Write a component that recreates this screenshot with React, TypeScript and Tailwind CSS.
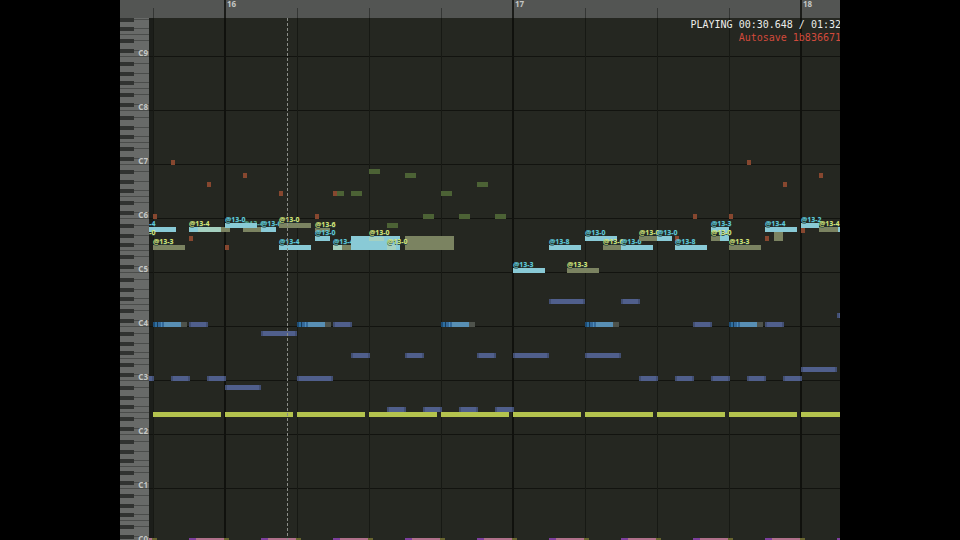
import clsx from 'clsx';

type Kind = 'kick' | 'bass' | 'hat' | 'arp' | 'lead' | 'echo' | 'mix' | 'drone';
type Tone = 'cyan' | 'lime' | 'teal';
type NoteData = [kind: Kind, x: number, y: number, w: number, h?: number, label?: string, tone?: Tone];

// x is counted in pixels from the first visible beat, y from the top of the roll
const BEAT = 72;
const LEAD_IN = 4;
const OCTAVE = 54;
const FIRST_C = 38;

const kindClass: Record<Kind, string> = {
  kick: 'bg-[#87472f]',
  bass: 'bg-[#505f8c] border-x-2 border-[#424f73]',
  hat: 'bg-[#4c6235]',
  arp: 'bg-[#588fb4]',
  lead: 'bg-[#89cad6]',
  echo: 'bg-[#7b8361]',
  mix: 'bg-[#a5d0bf]',
  drone: 'bg-[#b4c34e]',
};

const toneClass: Record<Tone, string> = {
  cyan: 'text-[#5fcbdc]',
  lime: 'text-[#d5e677]',
  teal: 'text-[#59ad93]',
};

const bars = [
  { beat: 1, name: '16' },
  { beat: 5, name: '17' },
  { beat: 9, name: '18' },
];
const beats = Array.from({ length: 18 }, (_, i) => i);
const octaves = [9, 8, 7, 6, 5, 4, 3, 2, 1, 0];

const kicks: NoteData[] = [
  ['kick', 18, 142, 4],
  ['kick', 54, 164, 4],
  ['kick', 90, 155, 4],
  ['kick', 0, 196, 4],
  ['kick', 36, 218, 4],
  ['kick', 72, 227, 4],
  ['kick', 126, 173, 4],
  ['kick', 162, 196, 4],
  ['kick', 180, 173, 4],
  ['kick', 522, 218, 4],
  ['kick', 540, 196, 4],
  ['kick', 576, 196, 4],
  ['kick', 594, 142, 4],
  ['kick', 612, 218, 4],
  ['kick', 630, 164, 4],
  ['kick', 648, 210, 4],
  ['kick', 666, 155, 4],
];

const hats: NoteData[] = [
  ['hat', 184, 173, 7],
  ['hat', 198, 173, 11],
  ['hat', 216, 151, 11],
  ['hat', 234, 205, 11],
  ['hat', 252, 155, 11],
  ['hat', 270, 196, 11],
  ['hat', 288, 173, 11],
  ['hat', 306, 196, 11],
  ['hat', 324, 164, 11],
  ['hat', 342, 196, 11],
];

const bass: NoteData[] = [
  ['bass', 36, 304, 19],
  ['bass', 180, 304, 19],
  ['bass', 540, 304, 19],
  ['bass', 612, 304, 19],
  ['bass', 108, 313, 36],
  ['bass', -18, 358, 19],
  ['bass', 18, 358, 19],
  ['bass', 54, 358, 19],
  ['bass', 144, 358, 36],
  ['bass', 486, 358, 19],
  ['bass', 522, 358, 19],
  ['bass', 558, 358, 19],
  ['bass', 594, 358, 19],
  ['bass', 630, 358, 19],
  ['bass', 72, 367, 36],
  ['bass', 198, 335, 19],
  ['bass', 252, 335, 19],
  ['bass', 324, 335, 19],
  ['bass', 360, 335, 36],
  ['bass', 432, 335, 36],
  ['bass', 234, 389, 19],
  ['bass', 270, 389, 19],
  ['bass', 306, 389, 19],
  ['bass', 342, 389, 19],
  ['bass', 648, 349, 36],
  ['bass', 396, 281, 36],
  ['bass', 468, 281, 19],
  ['bass', 684, 295, 36],
];

const melody: NoteData[] = [
  ['lead', -18, 209, 41, 5, '@13-4', 'cyan'],
  ['echo', 0, 227, 32, 5, '@13-3', 'lime'],
  ['echo', 68, 209, 9],
  ['lead', 36, 209, 9],
  ['mix', 45, 209, 23],
  ['echo', 90, 209, 19, 5, '@13-4', 'teal'],
  ['lead', 72, 205, 32, 5, '@13-0', 'cyan'],
  ['lead', 108, 209, 15, 5, '@13-6', 'cyan'],
  ['echo', 126, 205, 32, 5, '@13-0', 'lime'],
  ['lead', 126, 227, 32, 5, '@13-4', 'cyan'],
  ['echo', 162, 210, 15, 4, '@13-6', 'lime'],
  ['lead', 162, 218, 15, 5, '@13-0', 'cyan'],
  ['echo', 189, 227, 9],
  ['mix', 180, 227, 9, 5, '@13-4', 'cyan'],
  ['lead', 198, 218, 49, 14],
  ['echo', 252, 218, 49, 14],
  ['mix', 216, 219, 15, 4],
  ['mix', 234, 227, 9],
  ['lead', 360, 250, 32, 5, '@13-3', 'cyan'],
  ['lead', 396, 227, 32, 5, '@13-8', 'cyan'],
  ['echo', 414, 250, 32, 5, '@13-3', 'lime'],
  ['lead', 432, 218, 32, 5, '@13-0', 'cyan'],
  ['echo', 450, 227, 19, 5, '@13-6', 'lime'],
  ['lead', 468, 227, 32, 5, '@13-6', 'cyan'],
  ['echo', 486, 218, 19, 5, '@13-0', 'lime'],
  ['lead', 504, 218, 15, 5, '@13-0', 'cyan'],
  ['lead', 522, 227, 32, 5, '@13-8', 'cyan'],
  ['lead', 558, 209, 18, 5, '@13-3', 'cyan'],
  ['echo', 558, 218, 9],
  ['lead', 567, 214, 9, 9],
  ['echo', 576, 227, 32, 5, '@13-3', 'lime'],
  ['echo', 621, 213, 9, 10],
  ['lead', 612, 209, 32, 5, '@13-4', 'cyan'],
  ['lead', 648, 205, 18, 5, '@13-2', 'cyan'],
  ['echo', 666, 209, 19, 5, '@13-4', 'lime'],
  ['lead', 685, 209, 19],
];

// Labels of notes that sit underneath another note
const labels: { x: number; y: number; text: string; tone: Tone }[] = [
  { x: -18, y: 212, text: '@13-0', tone: 'lime' },
  { x: 36, y: 203, text: '@13-4', tone: 'lime' },
  { x: 216, y: 212, text: '@13-0', tone: 'lime' },
  { x: 234, y: 221, text: '@13-0', tone: 'lime' },
  { x: 558, y: 212, text: '@13-0', tone: 'lime' },
];

const tagText =
  "font-['Noto_Sans',sans-serif] text-[7px] leading-[6px] font-bold whitespace-nowrap [text-shadow:0_1px_0_#2c4a48]";
const rulerText = "font-['Noto_Sans',sans-serif] text-[8px] leading-[7px] font-bold text-[#c4c6c4]";

const Note = ({ note }: { note: NoteData }) => {
  const [kind, x, y, w, h = 5, label, tone = 'cyan'] = note;

  return (
    <div className={clsx('absolute', kindClass[kind])} style={{ left: x + LEAD_IN, top: y, width: w, height: h }}>
      {label && <span className={clsx('absolute bottom-full left-0', tagText, toneClass[tone])}>{label}</span>}
    </div>
  );
};

// Plucked notes fade from a striped attack into a grey tail
const Pluck = ({ x }: { x: number }) => (
  <div className="absolute flex h-[5px]" style={{ left: x + LEAD_IN, top: 304 }}>
    <div className="w-[2px] bg-[#1d4c75]" />
    <div className="w-[2px] bg-[#2e6fa0]" />
    <div className="w-px bg-[#173a58]" />
    <div className="w-[3px] bg-[#34699a]" />
    <div className="w-px bg-[#4d8cba]" />
    <div className="w-[2px] bg-[#34699a]" />
    <div className={clsx('w-[17px]', kindClass.arp)} />
    <div className="w-[6px] bg-[#4f534c]" />
  </div>
);

const LowNote = ({ x }: { x: number }) => (
  <div className="absolute flex h-[5px]" style={{ left: x + LEAD_IN, top: 520 }}>
    <div className="w-[7px] bg-[#7d3f9c]" />
    <div className="w-[28px] bg-[#b0708a]" />
    <div className="w-[5px] bg-[#69652f]" />
  </div>
);

const WhiteKey = ({ className, sharp }: { className: string; sharp?: boolean }) => (
  <div className={clsx('relative border-b border-[#4a4c4a] bg-[#686a68]', className)}>
    {sharp && <div className="absolute -bottom-[3px] left-0 z-10 h-1 w-[14px] bg-[#313331]" />}
  </div>
);

const Octave = ({ n }: { n: number }) => (
  <div className="relative flex flex-col">
    <WhiteKey className="h-[7px]" sharp />
    <WhiteKey className="h-[10px]" sharp />
    <WhiteKey className="h-[9px]" sharp />
    <WhiteKey className="h-[6px]" />
    <WhiteKey className="h-[6px]" sharp />
    <WhiteKey className="h-[10px]" sharp />
    <WhiteKey className="h-[6px]" />
    <span className={clsx('absolute right-px bottom-px', rulerText)}>C{n}</span>
  </div>
);

const Ruler = () => (
  <header className="h-[18px] shrink-0 bg-[#535553] pl-[29px]">
    <div className="relative h-full overflow-x-clip">
      {beats.map((b) => (
        <div
          key={b}
          className={clsx('absolute bottom-0', b % 4 === 1 ? 'h-full w-[2px] bg-[#1b1c19]' : 'h-[10px] w-px bg-[#343634]')}
          style={{ left: b * BEAT + LEAD_IN - (b % 4 === 1 ? 1 : 0) }}
        />
      ))}
      {bars.map((bar) => (
        <span key={bar.name} className={clsx('absolute top-0', rulerText)} style={{ left: bar.beat * BEAT + LEAD_IN + 2 }}>
          {bar.name}
        </span>
      ))}
    </div>
  </header>
);

const Roll = () => (
  <main className="relative flex-1 overflow-hidden bg-[#252721]">
    <div className="absolute inset-y-0 left-0 w-1 bg-[#1c1e1a]" />
    {octaves.map((n, i) => (
      <div key={n} className="absolute inset-x-0 h-px bg-[#12130f]" style={{ top: FIRST_C + i * OCTAVE }} />
    ))}
    {beats.map((b) => (
      <div
        key={b}
        className={clsx('absolute inset-y-0', b % 4 === 1 ? 'w-[2px] bg-[#10110d]' : 'w-px bg-[#171914]')}
        style={{ left: b * BEAT + LEAD_IN - (b % 4 === 1 ? 1 : 0) }}
      />
    ))}
    {beats.map((b) => (
      <Note key={b} note={['drone', b * BEAT, 394, 68]} />
    ))}
    {[0, 2, 4, 6, 8].map((b) => (
      <Pluck key={b} x={b * BEAT} />
    ))}
    {[...bass, ...hats, ...kicks, ...melody].map((note, i) => (
      <Note key={i} note={note} />
    ))}
    {labels.map((l) => (
      <span
        key={`${l.x}-${l.y}`}
        className={clsx('absolute', tagText, toneClass[l.tone])}
        style={{ left: l.x + LEAD_IN, top: l.y }}
      >
        {l.text}
      </span>
    ))}
    {beats.map((b) => (
      <LowNote key={b} x={b * BEAT - 36} />
    ))}
    <div className="absolute inset-y-0 left-[138px] w-px bg-[repeating-linear-gradient(to_bottom,#8b8d88_0_3px,transparent_3px_5px)]" />
    <div className="absolute top-0 -right-px text-right font-['DejaVu_Sans_Mono',monospace] text-[10px] leading-[13px] whitespace-nowrap">
      <p className="text-[#ecedea]">PLAYING 00:30.648 / 01:32</p>
      <p className="text-[#d24a3c]">Autosave 1b836671</p>
    </div>
  </main>
);

const App = () => (
  <div className="flex h-screen justify-center bg-black">
    <div className="flex w-3/4 flex-col overflow-hidden">
      <Ruler />
      <div className="flex min-h-0 flex-1">
        <aside className="w-[29px] shrink-0 overflow-hidden">
          <div className="-mt-[15px] flex flex-col">
            {octaves.map((n) => (
              <Octave key={n} n={n} />
            ))}
          </div>
        </aside>
        <Roll />
      </div>
    </div>
  </div>
);

export default App;
